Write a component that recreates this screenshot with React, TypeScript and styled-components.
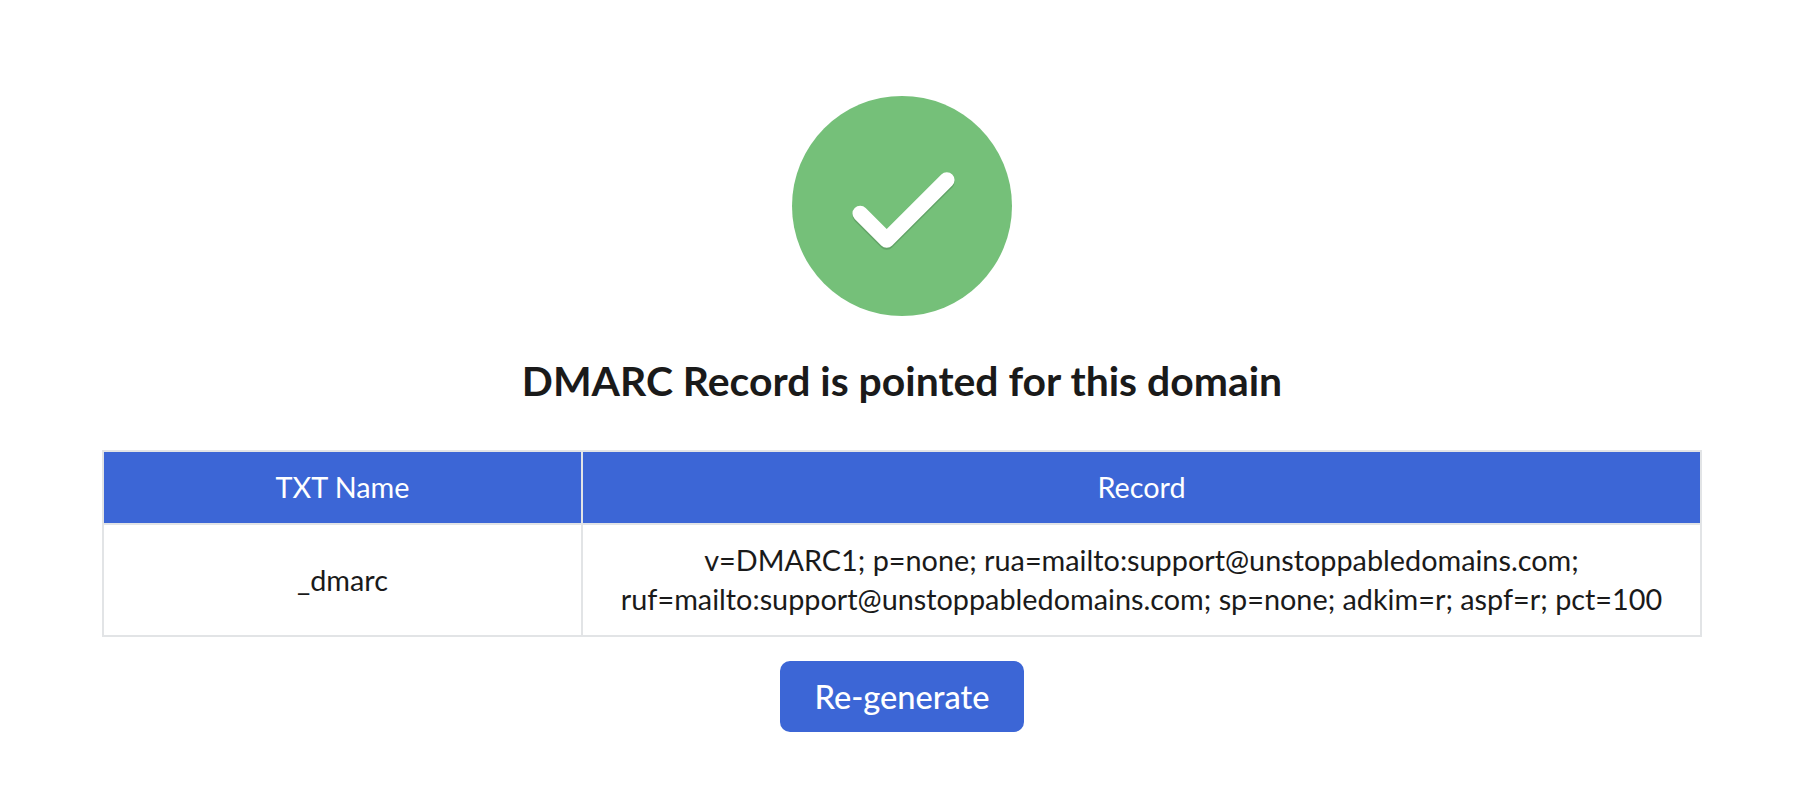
import React from "react";
import styled, { createGlobalStyle } from "styled-components";

const Global = createGlobalStyle`
  html, body { margin: 0; padding: 0; background: #fff; }
  body { font-family: Lato, "Liberation Sans", sans-serif; color: #1a1a1a; }
`;

const Page = styled.main`
  width: 1802px;
  height: 794px;
  box-sizing: border-box;
  padding: 96px 100px 0 102px;
  display: flex;
  flex-direction: column;
  align-items: center;
  overflow: hidden;
`;

const Badge = styled.svg`
  width: 220px;
  height: 220px;
  display: block;
  flex: none;
`;

const Title = styled.h1`
  margin: 37px 0 0;
  font-size: 40.9px;
  line-height: 56px;
  font-weight: 700;
  color: #1a1a1a;
  text-align: center;
`;

const Table = styled.table`
  margin-top: 41px;
  width: 1600px;
  border-collapse: collapse;
  table-layout: fixed;
  border: 2px solid #e2e4e6;
`;

const HeadCell = styled.th<{ $width?: number }>`
  width: ${(p) => (p.$width ? `${p.$width}px` : "auto")};
  height: 69px;
  padding: 0 0 2px;
  background: #3c66d6;
  color: #fff;
  font-size: 28.8px;
  font-weight: 400;
  text-align: center;
  border: 2px solid #e2e4e6;
`;

const BodyCell = styled.td`
  height: 110px;
  padding: 0 16px;
  font-size: 28.8px;
  line-height: 39px;
  color: #1a1a1a;
  text-align: center;
  border: 2px solid #e2e4e6;
`;

const Button = styled.button`
  margin-top: 24px;
  width: 244px;
  height: 71px;
  border: 0;
  border-radius: 10px;
  background: #3c66d6;
  color: #fff;
  font-family: inherit;
  font-size: 32.6px;
  font-weight: 500;
`;

const checkPath = "M68.2 117.5 L94.7 144 L154.8 84";

export default function App() {
  return (
    <>
      <Global />
      <Page>
        <Badge viewBox="0 0 220 220" aria-hidden="true">
          <circle cx="110" cy="110" r="110" fill="#75c079" />
          <path d={checkPath} fill="none" stroke="#5b9a60" strokeWidth="15.5" strokeLinecap="round" strokeLinejoin="round" transform="translate(0 2)" opacity="0.75" />
          <path d={checkPath} fill="none" stroke="#fff" strokeWidth="15.5" strokeLinecap="round" strokeLinejoin="round" />
        </Badge>
        <Title>DMARC Record is pointed for this domain</Title>
        <Table>
          <thead>
            <tr>
              <HeadCell $width={477}>TXT Name</HeadCell>
              <HeadCell>Record</HeadCell>
            </tr>
          </thead>
          <tbody>
            <tr>
              <BodyCell>_dmarc</BodyCell>
              <BodyCell>
                v=DMARC1; p=none; rua=mailto:support@unstoppabledomains.com;
                <br />
                ruf=mailto:support@unstoppabledomains.com; sp=none; adkim=r; aspf=r; pct=100
              </BodyCell>
            </tr>
          </tbody>
        </Table>
        <Button>Re-generate</Button>
      </Page>
    </>
  );
}
